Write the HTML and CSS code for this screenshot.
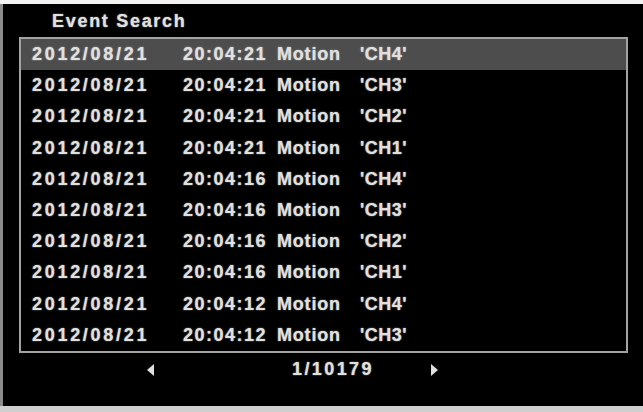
FILE: index.html
```html
<!DOCTYPE html>
<html>
<head>
<meta charset="utf-8">
<title>Event Search</title>
<link rel="stylesheet" href="styles.css">
</head>
<body>
<div class="screen">
  <div class="panel">
    <div class="title">Event Search</div>
    <div class="list">
      <div class="row selected"><span class="date">2012/08/21</span><span class="time">20:04:21</span><span class="type">Motion</span><span class="ch">'CH4'</span></div>
      <div class="row"><span class="date">2012/08/21</span><span class="time">20:04:21</span><span class="type">Motion</span><span class="ch">'CH3'</span></div>
      <div class="row"><span class="date">2012/08/21</span><span class="time">20:04:21</span><span class="type">Motion</span><span class="ch">'CH2'</span></div>
      <div class="row"><span class="date">2012/08/21</span><span class="time">20:04:21</span><span class="type">Motion</span><span class="ch">'CH1'</span></div>
      <div class="row"><span class="date">2012/08/21</span><span class="time">20:04:16</span><span class="type">Motion</span><span class="ch">'CH4'</span></div>
      <div class="row"><span class="date">2012/08/21</span><span class="time">20:04:16</span><span class="type">Motion</span><span class="ch">'CH3'</span></div>
      <div class="row"><span class="date">2012/08/21</span><span class="time">20:04:16</span><span class="type">Motion</span><span class="ch">'CH2'</span></div>
      <div class="row"><span class="date">2012/08/21</span><span class="time">20:04:16</span><span class="type">Motion</span><span class="ch">'CH1'</span></div>
      <div class="row"><span class="date">2012/08/21</span><span class="time">20:04:12</span><span class="type">Motion</span><span class="ch">'CH4'</span></div>
      <div class="row"><span class="date">2012/08/21</span><span class="time">20:04:12</span><span class="type">Motion</span><span class="ch">'CH3'</span></div>
    </div>
    <div class="pager">
      <span class="arrow arrow-left"></span>
      <span class="page">1/10179</span>
      <span class="arrow arrow-right"></span>
    </div>
  </div>
</div>
</body>
</html>
```

FILE: styles.css
```css
html, body {
  margin: 0;
  padding: 0;
}

body {
  width: 643px;
  height: 412px;
  overflow: hidden;
  background: #d9d9d9;
}

.screen {
  width: 643px;
  height: 412px;
  padding-top: 4px;
  padding-bottom: 6px;
  box-sizing: border-box;
  background: linear-gradient(#f2f2f2, #cfcfcf);
}

.panel {
  height: 402px;
  box-sizing: border-box;
  background: #000;
  border-left: 3px solid #8c8c8c;
  display: flex;
  flex-direction: column;
  font-family: "Liberation Sans", Arial, sans-serif;
  font-weight: bold;
  font-size: 18px;
  color: #e0e0e0;
  text-shadow: 0 0 1.5px rgba(255, 255, 255, 0.7);
}

.title {
  height: 33px;
  box-sizing: border-box;
  padding: 7px 0 0 49px;
  line-height: 21px;
  letter-spacing: 1.7px;
}

.list {
  margin: 0 15px 0 16px;
  border: 2px solid #a3a3a3;
  display: flex;
  flex-direction: column;
}

.row {
  height: 31.2px;
  display: flex;
  align-items: center;
  padding-left: 11px;
  white-space: nowrap;
}

.row.selected {
  background: #4d4d4d;
}

.date {
  width: 151px;
  letter-spacing: 2.7px;
}

.time {
  width: 94px;
  letter-spacing: 1.5px;
}

.type {
  width: 83px;
  letter-spacing: 0.8px;
}

.ch {
  letter-spacing: 0.5px;
}

.pager {
  height: 34px;
  display: flex;
  align-items: center;
}

.arrow {
  width: 0;
  height: 0;
  border-top: 6px solid transparent;
  border-bottom: 6px solid transparent;
}

.arrow-left {
  margin-left: 144px;
  border-right: 7px solid #e0e0e0;
}

.page {
  margin-left: 138px;
  letter-spacing: 2.4px;
}

.arrow-right {
  margin-left: 57px;
  border-left: 7px solid #e0e0e0;
}
```
